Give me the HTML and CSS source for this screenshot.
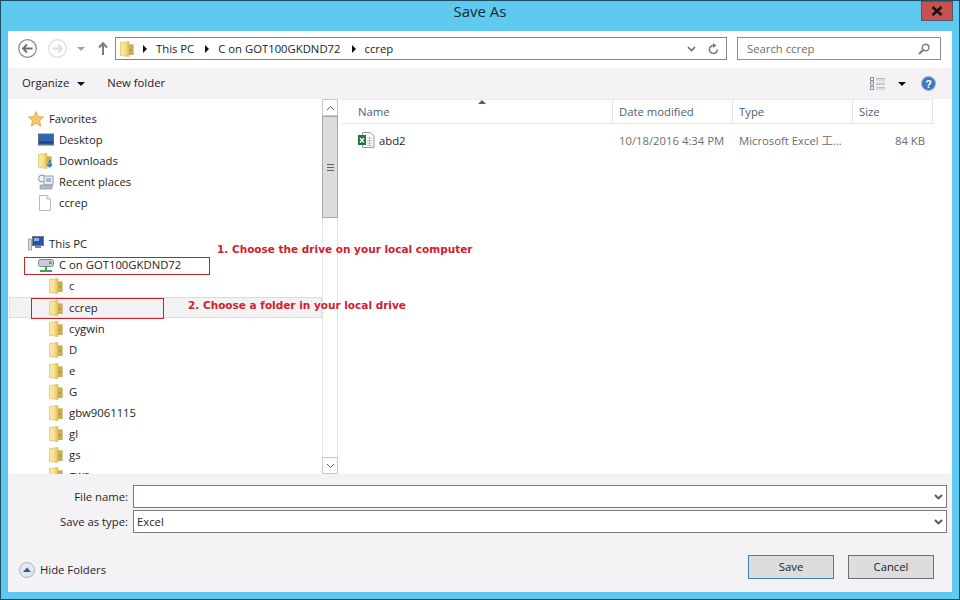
FILE: index.html
```html
<!DOCTYPE html>
<html lang="en">

<head>
    <meta charset="UTF-8">
    <meta name="viewport" content="width=device-width, initial-scale=1.0">
    <title>Save As</title>
    <link rel="stylesheet" href="styles.css">
</head>

<body>
    <svg class="defs" width="0" height="0">
        <defs>
            <linearGradient id="folderFill" x1="0" y1="0" x2="1" y2="0">
                <stop offset="0" stop-color="#fbeaa8" />
                <stop offset="0.55" stop-color="#f8df88" />
                <stop offset="1" stop-color="#dfbf60" />
            </linearGradient>
            <symbol id="folder" viewBox="0 0 14 16">
                <path d="M0.5 1.5 L9 0.5 V3 H13.5 V14 H9 V15.5 L0.5 14.5 Z" fill="#e3c66d" />
                <path d="M0.5 1.5 L9 0.5 V15.5 L0.5 14.5 Z" fill="url(#folderFill)" stroke="#d2b45c" stroke-width="0.5" />
                <path d="M9 4 H13.5 V14 H9 Z" fill="#c9ad5a" />
                <rect x="10" y="8" width="1.5" height="2" fill="#8c9c5a" />
            </symbol>
        </defs>
    </svg>

    <div class="window">
        <div class="titlebar">
            <span class="title">Save As</span>
            <div class="close">
                <svg width="12" height="10" viewBox="0 0 12 10"><path d="M1.5 1 L10.5 9 M10.5 1 L1.5 9" stroke="#1a1010" stroke-width="2.6" /></svg>
            </div>
        </div>

        <div class="nav">
            <svg class="nav-back" width="19" height="19" viewBox="0 0 19 19"><circle cx="9.5" cy="9.5" r="8.8" fill="#fff" stroke="#8a8a8a" stroke-width="1.2" /><path d="M14.5 9.5 H5.5 M9 5.5 L5 9.5 L9 13.5" fill="none" stroke="#6f6f6f" stroke-width="1.8" /></svg>
            <svg class="nav-forward" width="19" height="19" viewBox="0 0 19 19"><circle cx="9.5" cy="9.5" r="8.8" fill="#fff" stroke="#dcdcdc" stroke-width="1.2" /><path d="M4.5 9.5 H13.5 M10 5.5 L14 9.5 L10 13.5" fill="none" stroke="#dcdcdc" stroke-width="1.8" /></svg>
            <span class="nav-caret"></span>
            <svg class="nav-up" width="10" height="13" viewBox="0 0 10 13"><path d="M5 13 V2 M1 5.5 L5 1.2 L9 5.5" fill="none" stroke="#7d7d7d" stroke-width="2" /></svg>
            <div class="address">
                <svg class="address-folder" width="14" height="16"><use href="#folder" /></svg>
                <span class="crumb-arrow"></span><span class="crumb">This PC</span>
                <span class="crumb-arrow"></span><span class="crumb">C on GOT100GKDND72</span>
                <span class="crumb-arrow"></span><span class="crumb">ccrep</span>
                <svg class="address-chevron" width="9" height="6" viewBox="0 0 9 6"><path d="M1 1 L4.5 4.5 L8 1" fill="none" stroke="#6a6a6a" stroke-width="1.6" /></svg>
                <svg class="address-refresh" width="11" height="12" viewBox="0 0 11 12"><path d="M9.4 6.5 A4 4 0 1 1 5.5 2.5" fill="none" stroke="#7a7a7a" stroke-width="1.6" /><path d="M5 0 L8.5 2.6 L5 5 Z" fill="#7a7a7a" /></svg>
            </div>
            <div class="search">
                <span>Search ccrep</span>
                <svg width="12" height="12" viewBox="0 0 12 12"><circle cx="7.5" cy="4.5" r="3.3" fill="none" stroke="#7d7d7d" stroke-width="1.4" /><path d="M5 7 L1 11" stroke="#7d7d7d" stroke-width="2" /></svg>
            </div>
        </div>

        <div class="toolbar">
            <span class="tool">Organize</span>
            <span class="tool-caret"></span>
            <span class="tool tool-new">New folder</span>
            <svg class="view-icon" width="16" height="13" viewBox="0 0 16 13">
                <g fill="#fff" stroke="#8b8f96"><rect x="0.5" y="0.5" width="3" height="3" /><rect x="0.5" y="5" width="3" height="3" /><rect x="0.5" y="9.5" width="3" height="3" /></g>
                <path d="M6 1.5 H15 M6 3 H15 M6 6 H15 M6 7.5 H15 M6 10.5 H15 M6 12 H15" stroke="#a5a9b0" stroke-width="0.7" />
            </svg>
            <span class="tool-caret view-caret"></span>
            <svg class="help" width="15" height="15" viewBox="0 0 15 15"><circle cx="7.5" cy="7.5" r="7" fill="#3f77c4" stroke="#9db6dc" /><text x="7.5" y="11.5" text-anchor="middle" class="help-mark">?</text></svg>
        </div>

        <div class="main">
            <div class="tree">
                <div class="row group">
                    <svg class="icon" width="16" height="16" viewBox="0 0 16 16"><path d="M8 .6 L10.2 5.6 L15.6 6.1 L11.5 9.7 L12.8 15.2 L8 12.3 L3.2 15.2 L4.5 9.7 L.4 6.1 L5.8 5.6 Z" fill="#fbc56a" stroke="#e59a3a" stroke-width="0.8" /></svg>
                    <span>Favorites</span>
                </div>
                <div class="row sub">
                    <svg class="icon" width="16" height="13" viewBox="0 0 16 13"><rect x="0" y="0.5" width="16" height="12" fill="#5a6f8a" /><rect x="1" y="1.5" width="14" height="9" fill="#2c66b8" /><rect x="1" y="8.5" width="14" height="2" fill="#173f7c" /></svg>
                    <span>Desktop</span>
                </div>
                <div class="row sub">
                    <svg class="icon" width="16" height="16" viewBox="0 0 16 16"><use href="#folder" width="14" height="16" /><path d="M11 7 V11 H8.5 L11.5 15 L14.8 11 H12.8 V7 Z" fill="#2b8ad8" /></svg>
                    <span>Downloads</span>
                </div>
                <div class="row sub">
                    <svg class="icon" width="16" height="16" viewBox="0 0 16 16"><circle cx="4" cy="4.5" r="3.5" fill="#eef0f2" stroke="#8a8f96" /><rect x="6" y="2" width="9" height="9" fill="#e8edf3" stroke="#8fa0b3" /><rect x="8" y="4" width="5" height="4" fill="#9bbbdc" /><rect x="2" y="11" width="12" height="4" fill="#b5b8bc" stroke="#84888d" stroke-width="0.6" /></svg>
                    <span>Recent places</span>
                </div>
                <div class="row sub">
                    <svg class="icon icon-doc" width="14" height="16" viewBox="0 0 14 16"><path d="M1.5 .5 H9 L12.5 4 V15.5 H1.5 Z" fill="#fff" stroke="#b9b9b9" /><path d="M9 .5 V4 H12.5" fill="#eee" stroke="#b9b9b9" /></svg>
                    <span>ccrep</span>
                </div>
                <div class="row group section">
                    <svg class="icon" width="16" height="15" viewBox="0 0 16 15"><rect x="0.5" y="3" width="3" height="11" fill="#d9dce0" stroke="#7e858d" stroke-width="0.7" /><rect x="4.5" y="0.5" width="11" height="9" fill="#2a4fa8" stroke="#6d7a8a" /><rect x="6" y="2" width="5" height="3" fill="#8db4e8" /><rect x="7" y="10" width="6" height="2" fill="#7e858d" /></svg>
                    <span>This PC</span>
                </div>
                <div class="row sub">
                    <svg class="icon" width="16" height="16" viewBox="0 0 16 16"><rect x="0.5" y="2.5" width="15" height="7" rx="2" fill="#c9ced2" stroke="#7f878d" /><rect x="11" y="4.5" width="2.5" height="2.5" fill="#5c9e4a" /><path d="M8 10 V13 M2 14 H14" stroke="#3aa655" stroke-width="2" /></svg>
                    <span>C on GOT100GKDND72</span>
                </div>
                <div class="row folder"><svg class="icon" width="14" height="16"><use href="#folder" /></svg><span>c</span></div>
                <div class="row folder hovered"><svg class="icon" width="14" height="16"><use href="#folder" /></svg><span>ccrep</span></div>
                <div class="row folder"><svg class="icon" width="14" height="16"><use href="#folder" /></svg><span>cygwin</span></div>
                <div class="row folder"><svg class="icon" width="14" height="16"><use href="#folder" /></svg><span>D</span></div>
                <div class="row folder"><svg class="icon" width="14" height="16"><use href="#folder" /></svg><span>e</span></div>
                <div class="row folder"><svg class="icon" width="14" height="16"><use href="#folder" /></svg><span>G</span></div>
                <div class="row folder"><svg class="icon" width="14" height="16"><use href="#folder" /></svg><span>gbw9061115</span></div>
                <div class="row folder"><svg class="icon" width="14" height="16"><use href="#folder" /></svg><span>gl</span></div>
                <div class="row folder"><svg class="icon" width="14" height="16"><use href="#folder" /></svg><span>gs</span></div>
                <div class="row folder"><svg class="icon" width="14" height="16"><use href="#folder" /></svg><span>gws</span></div>
            </div>

            <div class="scrollbar">
                <div class="scroll-btn">
                    <svg width="9" height="6" viewBox="0 0 9 6"><path d="M1 5 L4.5 1.5 L8 5" fill="none" stroke="#606060" /></svg>
                </div>
                <div class="scroll-thumb"><span class="grip"></span></div>
                <div class="scroll-track"></div>
                <div class="scroll-btn">
                    <svg width="9" height="6" viewBox="0 0 9 6"><path d="M1 1 L4.5 4.5 L8 1" fill="none" stroke="#606060" /></svg>
                </div>
            </div>

            <div class="files">
                <div class="file-head">
                    <span class="sort-arrow"></span>
                    <div class="col col-name">Name</div>
                    <div class="col col-date">Date modified</div>
                    <div class="col col-type">Type</div>
                    <div class="col col-size">Size</div>
                </div>
                <div class="file-row">
                    <div class="col-name file-name">
                        <svg width="17" height="16" viewBox="0 0 17 16"><path d="M4.5 .5 H12 L16 4 V15.5 H4.5 Z" fill="#fff" stroke="#9a9a9a" /><path d="M9 6 H14.5 M9 8.5 H14.5 M9 11 H14.5 M9 13.5 H14.5 M11.5 5 V14" stroke="#a9b5ad" stroke-width="0.8" /><rect x="0" y="3" width="8" height="10" fill="#1f7346" /><path d="M2 6 L6 10.5 M6 6 L2 10.5" stroke="#fff" stroke-width="1.3" /></svg>
                        <span>abd2</span>
                    </div>
                    <div class="col-date cell">10/18/2016 4:34 PM</div>
                    <div class="col-type cell">Microsoft Excel 工...</div>
                    <div class="col-size cell cell-size">84 KB</div>
                </div>
            </div>
        </div>

        <div class="bottom">
            <div class="field field-first">
                <label class="field-label">File name:</label>
                <div class="combo">
                    <span></span>
                    <svg width="9" height="6" viewBox="0 0 9 6"><path d="M1 1 L4.5 4.5 L8 1" fill="none" stroke="#555" stroke-width="1.8" /></svg>
                </div>
            </div>
            <div class="field">
                <label class="field-label">Save as type:</label>
                <div class="combo">
                    <span>Excel</span>
                    <svg width="9" height="6" viewBox="0 0 9 6"><path d="M1 1 L4.5 4.5 L8 1" fill="none" stroke="#555" stroke-width="1.8" /></svg>
                </div>
            </div>
            <div class="actions">
                <div class="hide-folders">
                    <svg width="16" height="16" viewBox="0 0 16 16"><circle cx="8" cy="8" r="7.5" fill="#e3e8f1" stroke="#aab4c6" /><path d="M4 10 L8 5.5 L12 10 Z" fill="#2d5d9a" /></svg>
                    <span>Hide Folders</span>
                </div>
                <button class="btn btn-default">Save</button>
                <button class="btn btn-cancel">Cancel</button>
            </div>
        </div>

        <!-- red notes drawn over the dialog -->
        <div class="note-box note-box-drive"></div>
        <div class="note-box note-box-folder"></div>
        <div class="note note-drive">1. Choose the drive on your local computer</div>
        <div class="note note-folder">2. Choose a folder in your local drive</div>
    </div>
</body>

</html>
```

FILE: styles.css
```css
body {
    margin: 0;
    font-family: "Open Sans", "Noto Sans CJK SC", sans-serif;
    font-size: 11.3px;
    color: #1e1e1e;
}

.defs {
    position: absolute;
}

.window {
    position: relative;
    box-sizing: border-box;
    width: 960px;
    height: 600px;
    display: flex;
    flex-direction: column;
    padding: 0 7px 7px;
    background-color: #5fc9ef;
    border: 1px solid #1c4f63;
    overflow: hidden;
}

.titlebar {
    height: 30px;
    flex: none;
    display: flex;
    justify-content: center;
    position: relative;
}

.title {
    font-size: 15px;
    line-height: 21px;
    color: #1a2a33;
}

.close {
    position: absolute;
    top: 0;
    right: -1px;
    width: 32px;
    height: 20px;
    display: flex;
    align-items: center;
    justify-content: center;
    background-color: #c75050;
    border: 1px solid #4d5b62;
    box-sizing: border-box;
}

/* address row */
.nav {
    height: 37px;
    flex: none;
    box-sizing: border-box;
    display: flex;
    align-items: flex-start;
    padding: 6px 0 0 10px;
    background-color: #fff;
}

.nav-back {
    margin-top: 2px;
}

.nav-forward {
    margin: 2px 0 0 11px;
}

.nav-caret {
    margin: 10px 0 0 10px;
    border-top: 4px solid #a0a0a0;
    border-left: 4px solid transparent;
    border-right: 4px solid transparent;
}

.nav-up {
    margin: 5px 0 0 13px;
}

.address {
    width: 612px;
    height: 23px;
    margin-left: 7px;
    box-sizing: border-box;
    display: flex;
    align-items: center;
    border: 1px solid #838383;
    padding-left: 4px;
}

.crumb-arrow {
    margin: 0 9px 0 9px;
    border-left: 4px solid #111;
    border-top: 4px solid transparent;
    border-bottom: 4px solid transparent;
}

.crumb {
    color: #222;
    margin-right: 2px;
}

.address-chevron {
    margin-left: auto;
}

.address-refresh {
    margin: 0 7px 0 12px;
}

.search {
    width: 204px;
    height: 23px;
    margin-left: 10px;
    box-sizing: border-box;
    display: flex;
    align-items: center;
    justify-content: space-between;
    border: 1px solid #8e8e8e;
    padding: 0 10px 0 9px;
    color: #6d6d6d;
}

/* command bar */
.toolbar {
    height: 31px;
    flex: none;
    box-sizing: border-box;
    display: flex;
    align-items: center;
    padding-left: 14px;
    background-color: #f5f2f6;
}

.tool {
    color: #222;
    padding-bottom: 2px;
}

.tool-caret {
    margin-left: 8px;
    border-top: 4px solid #111;
    border-left: 4px solid transparent;
    border-right: 4px solid transparent;
}

.tool-new {
    margin-left: 22px;
}

.view-icon {
    margin-left: auto;
    margin-right: -1px;
}

.view-caret {
    margin-left: 13px;
}

.help {
    margin: 0 16px 0 15px;
}

.help-mark {
    font-family: "Liberation Sans", sans-serif;
    font-size: 11px;
    font-weight: 700;
    fill: #fff;
}

/* tree, scrollbar, file list */
.main {
    height: 375px;
    flex: none;
    display: flex;
    background-color: #fff;
}

.tree {
    width: 314px;
    flex: none;
    overflow: hidden;
    padding-top: 9px;
    box-sizing: border-box;
}

.row {
    height: 21px;
    display: flex;
    align-items: center;
    box-sizing: border-box;
    white-space: nowrap;
}

.row:last-child {
    margin-top: -1px;
}

.icon {
    flex: none;
    margin-right: 5px;
}

.icon-doc {
    margin-right: 7px;
}

.group {
    padding-left: 20px;
}

.sub {
    padding-left: 30px;
}

.folder {
    padding-left: 41px;
}

.folder .icon {
    margin-right: 6px;
}

.section {
    margin-top: 20px;
}

.hovered {
    margin-top: 1px;
    margin-left: 1px;
    padding-left: 39px;
    background-color: #f2f2f2;
    border: 1px solid #dcdcdc;
    border-left-color: #e4e4e4;
}

.scrollbar {
    width: 16px;
    flex: none;
    display: flex;
    flex-direction: column;
}

.scroll-btn {
    height: 17px;
    flex: none;
    box-sizing: border-box;
    display: flex;
    align-items: center;
    justify-content: center;
    border: 1px solid #c8c8c8;
}

.scroll-thumb {
    height: 102px;
    flex: none;
    box-sizing: border-box;
    display: flex;
    align-items: center;
    justify-content: center;
    background-color: #dcdcdc;
    border: 1px solid #a8a8a8;
}

.grip {
    width: 7px;
    height: 7px;
    background: repeating-linear-gradient(#606060 0 1px, #dcdcdc 1px 3px);
}

.scroll-track {
    flex: 1;
    border-left: 1px solid #e6e6e6;
    border-right: 1px solid #e6e6e6;
}

.files {
    flex: 1;
    padding-left: 3px;
    position: relative;
}

.file-head {
    width: 592px;
    height: 25px;
    box-sizing: border-box;
    display: flex;
    align-items: center;
    border-top: 1px solid #ececec;
    border-bottom: 1px solid #e5e5e5;
    color: #4c607a;
}

.col {
    height: 100%;
    box-sizing: border-box;
    display: flex;
    align-items: center;
    padding-left: 6px;
    border-right: 1px solid #e5e5e5;
}

.col-name {
    width: 272px;
    padding-left: 17px;
    box-sizing: border-box;
}

.col-date,
.col-type {
    width: 120px;
}

.col-size {
    width: 80px;
}

.sort-arrow {
    position: absolute;
    left: 140px;
    top: 1px;
    border-bottom: 4px solid #4c607a;
    border-left: 4px solid transparent;
    border-right: 4px solid transparent;
}

.file-row {
    width: 592px;
    height: 22px;
    margin-top: 5px;
    display: flex;
    align-items: center;
}

.file-name {
    display: flex;
    align-items: center;
    gap: 4px;
}

.cell {
    box-sizing: border-box;
    padding-left: 6px;
    color: #6d6d6d;
    white-space: nowrap;
}

.cell-size {
    padding: 0 8px 0 0;
    text-align: right;
}

/* file name fields and buttons */
.bottom {
    flex: 1;
    display: flex;
    flex-direction: column;
    background-color: #f5f2f6;
}

.field {
    display: flex;
    align-items: center;
    margin-top: 2px;
    padding-right: 5px;
}

.field-first {
    margin-top: 11px;
}

.field-label {
    width: 120px;
    margin-right: 5px;
    text-align: right;
}

.combo {
    flex: 1;
    height: 23px;
    box-sizing: border-box;
    display: flex;
    align-items: center;
    justify-content: space-between;
    background-color: #fff;
    border: 1px solid #7a7a7a;
    padding: 0 3px 0 3px;
}

.actions {
    display: flex;
    align-items: center;
    margin-top: 22px;
    padding: 0 18px 0 11px;
}

.hide-folders {
    display: flex;
    align-items: center;
    gap: 5px;
    margin-right: auto;
    padding-top: 5px;
}

.btn {
    width: 86px;
    height: 24px;
    box-sizing: border-box;
    padding: 0 0 2px;
    font: inherit;
    color: #222;
    background-color: #dddddd;
    border: 1px solid #707070;
}

.btn-default {
    border-color: #3c7fb1;
}

.btn-cancel {
    margin-left: 14px;
}

/* notes */
.note-box {
    position: absolute;
    box-sizing: border-box;
    border: 1px solid #c9202c;
}

.note-box-drive {
    left: 23px;
    top: 256px;
    width: 186px;
    height: 18px;
}

.note-box-folder {
    left: 30px;
    top: 297px;
    width: 133px;
    height: 21px;
}

.note {
    position: absolute;
    font-family: "DejaVu Sans", sans-serif;
    font-weight: 700;
    font-size: 10.5px;
    line-height: 14px;
    color: #d0202c;
    white-space: nowrap;
}

.note-drive {
    left: 216px;
    top: 241px;
}

.note-folder {
    left: 187px;
    top: 297px;
}
```
